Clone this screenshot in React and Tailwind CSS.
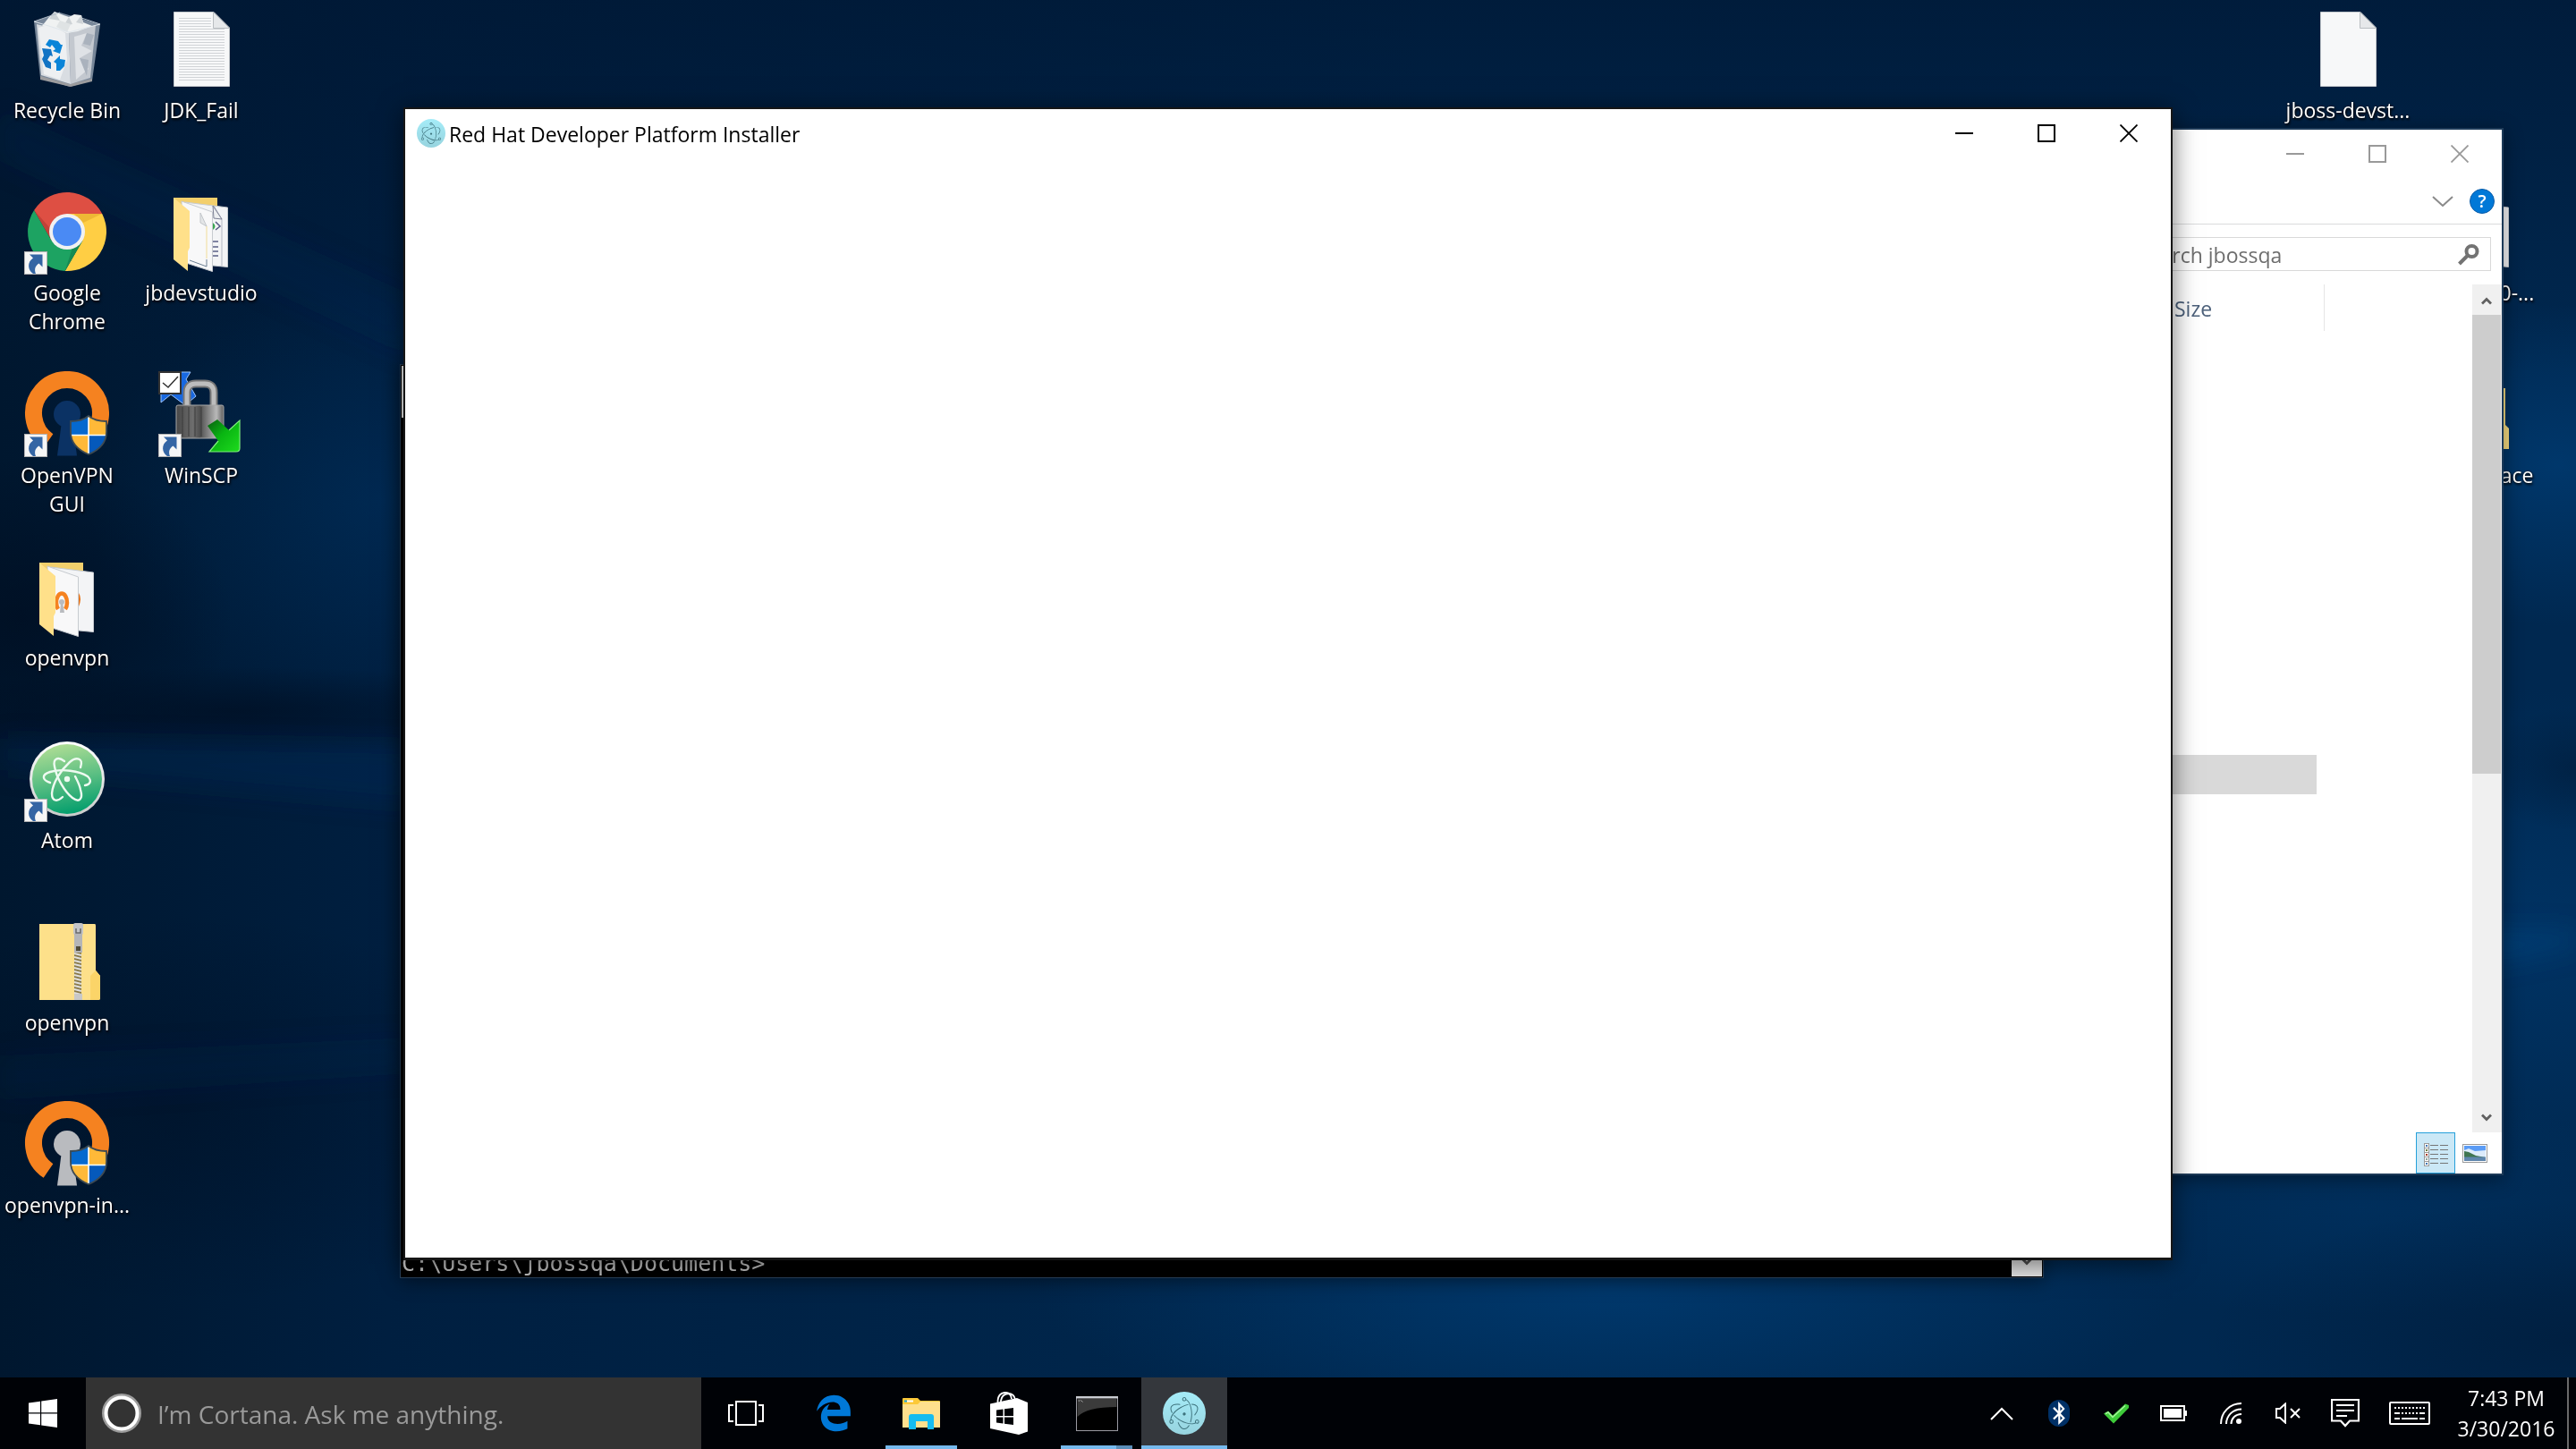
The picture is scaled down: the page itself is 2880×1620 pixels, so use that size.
import React from "react";
import { SiElectron } from "react-icons/si";
import { FaEdgeLegacy, FaBluetoothB } from "react-icons/fa6";

/* ---------- wallpaper ---------- */

function Wallpaper() {
  return (
    <svg
      className="absolute inset-0 h-full w-full"
      viewBox="0 0 2880 1540"
      preserveAspectRatio="none"
      aria-hidden="true"
    >
      <defs>
        <linearGradient id="wp-base" x1="0" y1="0" x2="1" y2="0">
          <stop offset="0" stopColor="#00172f" />
          <stop offset="0.15" stopColor="#001f40" />
          <stop offset="0.55" stopColor="#00284f" />
          <stop offset="1" stopColor="#002850" />
        </linearGradient>
        <linearGradient id="wp-top" x1="0" y1="0" x2="0" y2="1">
          <stop offset="0" stopColor="#001733" stopOpacity="0.7" />
          <stop offset="1" stopColor="#001733" stopOpacity="0" />
        </linearGradient>
        <radialGradient id="wp-glow">
          <stop offset="0" stopColor="#004380" stopOpacity="0.8" />
          <stop offset="1" stopColor="#004380" stopOpacity="0" />
        </radialGradient>
        <radialGradient id="wp-dark">
          <stop offset="0" stopColor="#000c1e" stopOpacity="0.6" />
          <stop offset="1" stopColor="#000c1e" stopOpacity="0" />
        </radialGradient>
        <filter id="wp-soft" x="-20%" y="-20%" width="140%" height="140%">
          <feGaussianBlur stdDeviation="14" />
        </filter>
      </defs>
      <rect width="2880" height="1540" fill="url(#wp-base)" />
      <rect width="2880" height="420" fill="url(#wp-top)" />
      <ellipse cx="430" cy="560" rx="330" ry="240" fill="url(#wp-glow)" opacity="0.35" />
      <ellipse cx="20" cy="690" rx="240" ry="180" fill="url(#wp-dark)" />
      <ellipse cx="260" cy="795" rx="360" ry="50" fill="url(#wp-dark)" />
      <ellipse cx="200" cy="1240" rx="420" ry="220" fill="url(#wp-dark)" opacity="0.6" />
      <ellipse cx="1800" cy="1440" rx="640" ry="170" fill="url(#wp-glow)" opacity="0.75" />
      <ellipse cx="2860" cy="520" rx="260" ry="180" fill="url(#wp-glow)" opacity="0.7" />
      <ellipse cx="2820" cy="1050" rx="420" ry="280" fill="url(#wp-glow)" opacity="0.5" />
      <ellipse cx="2640" cy="1350" rx="420" ry="120" fill="url(#wp-glow)" opacity="0.3" />
      <ellipse cx="2880" cy="1500" rx="420" ry="160" fill="url(#wp-dark)" opacity="0.5" />
      <ellipse cx="2880" cy="860" rx="110" ry="70" fill="url(#wp-dark)" opacity="0.5" />
      <g filter="url(#wp-soft)">
        <path d="M0 120 L460 330 L460 400 L0 180Z" fill="#003468" opacity="0.15" />
        <path d="M0 826 L460 834 L460 900 L0 860Z" fill="#003468" opacity="0.25" />
        <path d="M0 1180 L460 1160 L460 1200 L0 1230Z" fill="#003468" opacity="0.12" />
        <path d="M2780 1040 L2880 1040 L2880 1060 L2780 1080Z" fill="#00508f" opacity="0.3" />
      </g>
    </svg>
  );
}

/* ---------- desktop icon drawings (96 x 96) ---------- */

const iconBox = "size-24 shrink-0";

function ShortcutBadge() {
  return (
    <g>
      <rect x="0.5" y="70.5" width="25" height="25" fill="#f6f6f6" stroke="#b4b4b4" />
      <path
        d="M6 73.500 H20.500 V87.500 L16.500 83.500 C12.500 86 11 90 13 95 H10 C4 91 3 82 10 77.500Z"
        fill="#3465a4"
      />
    </g>
  );
}

function Shield() {
  return (
    <g>
      <clipPath id="shield-clip">
        <path d="M72 50 C66 55 59 56 52 56 V68 C52 80 60 88 72 93 C84 88 92 80 92 68 V56 C85 56 78 55 72 50Z" />
      </clipPath>
      <g clipPath="url(#shield-clip)">
        <rect x="50" y="48" width="22" height="23" fill="#0569cf" />
        <rect x="72" y="48" width="22" height="23" fill="#ffb938" />
        <rect x="50" y="71" width="22" height="24" fill="#ffb938" />
        <rect x="72" y="71" width="22" height="24" fill="#0559bb" />
        <path d="M72 48 V95 M50 71.500 H94" stroke="#fff" strokeWidth="1.600" />
      </g>
      <path
        d="M72 50 C66 55 59 56 52 56 V68 C52 80 60 88 72 93 C84 88 92 80 92 68 V56 C85 56 78 55 72 50Z"
        fill="none"
        stroke="#3d4a52"
        strokeWidth="1.800"
      />
    </g>
  );
}

function RecycleBinIcon() {
  return (
    <svg className={iconBox} viewBox="0 0 96 96" aria-hidden="true">
      <path d="M11 17 L40 7 L85 20 L76 83 L51 90 L18 80Z" fill="#8d9bab" opacity="0.85" />
      <path d="M18 78 L51 87 L76 81 V84 L52 90 L18 82Z" fill="#9c9c9e" />
      <path d="M14 20 L50 29 L52 87 L19 77Z" fill="#d9dde2" />
      <path d="M50 29 L80 21 L74 80 L52 87Z" fill="#c3c8cf" />
      <path d="M16 24 L30 20 L46 30 L48 60 L40 82 L22 76Z" fill="#eef0f2" />
      <path d="M56 34 L70 30 L64 44 L76 50 L62 58 L72 70 L58 82Z" fill="#dfe2e6" />
      <path d="M70 30 L78 32 L74 44 L66 42Z M62 58 L72 60 L70 78Z" fill="#aab2bd" />
      <path d="M20 22 L28 12 L34 6 L44 10 L50 12 L56 9 L64 10 L66 18 L76 22 L60 28 L48 30 L34 24Z" fill="#f0f2f2" />
      <path d="M34 6 L40 16 L28 14Z M50 12 L54 20 L44 22Z M64 10 L58 18 L66 20Z" fill="#ced3d6" />
      <path d="M40 16 L52 20 L48 29 L36 23Z" fill="#dfe3e4" />
      <path d="M11 17 L50 29 L85 20" fill="none" stroke="#dfe6ec" strokeWidth="1" />
      <path d="M11 17 L40 7 M64 13 L85 20" fill="none" stroke="#aeb9c5" strokeWidth="1" />
      <path d="M28 37 L38 39 L41 43 L43 43 L40 53 L32 50 L35 48 L31 43 L29 46 L24 43Z" fill="#0a84d8" />
      <path d="M20 47 L30 48 L32 56 L29 55 L26 60 L30 63 V62 V70 L24 68 L20 59 L22 55Z" fill="#1173c4" />
      <path d="M33 62 L40 55 V59 L46 60 L45 67 L40 72 H36 V64Z" fill="#0a84d8" />
    </svg>
  );
}

function PageShape({ children }) {
  return (
    <svg className={iconBox} viewBox="0 0 96 96" aria-hidden="true">
      <path d="M17.500 6.500 H62 L79.500 24 V89.500 H17.500Z" fill="#f7f8f9" stroke="#c4c8cc" />
      <path d="M61.500 6.500 V24.500 H79.500Z" fill="#e6e8ea" stroke="#b9bdc1" />
      {children}
    </svg>
  );
}

function TextFileIcon() {
  return (
    <PageShape>
      <path
        d="M23 13.500H59M23 16.500H59M23 19.500H59M23 22.500H59"
        stroke="#d0d3d6"
      />
      <path
        d="M23 25.500H74M23 28.500H74M23 31.500H74M23 34.500H74M23 37.500H74M23 40.500H74M23 43.500H74M23 46.500H74M23 49.500H74M23 52.500H74M23 55.500H74M23 58.500H74M23 61.500H74M23 64.500H74M23 67.500H74M23 70.500H74M23 73.500H74M23 76.500H74M23 79.500H74M23 82.500H74"
        stroke="#d0d3d6"
      />
    </PageShape>
  );
}

function ChromeIcon() {
  return (
    <svg className={iconBox} viewBox="0 0 96 96" aria-hidden="true">
      <path d="M11.100 24.100 L30.700 58 L48 48 V28 H87.200 A44 44 0 0 0 11.100 24.100Z" fill="#de4f43" />
      <path d="M87.200 28 H48 V48 L65.300 58 L45.700 91.900 A44 44 0 0 0 87.200 28Z" fill="#ffce44" />
      <path d="M45.700 91.900 L65.300 58 L48 48 L30.700 58 L11.100 24.100 A44 44 0 0 0 45.700 91.900Z" fill="#1da362" />
      <path d="M11.100 24.100 L30.700 58 L29 44Z" fill="#b53c33" opacity="0.7" />
      <path d="M87.200 28 H56 L66 38Z" fill="#e0a52a" opacity="0.55" />
      <path d="M45.700 91.900 L65.300 58 L54 66Z" fill="#12804b" opacity="0.7" />
      <circle cx="48" cy="48" r="20" fill="#f1f1f1" />
      <circle cx="48" cy="48" r="16" fill="#4a8af4" />
      <ShortcutBadge />
    </svg>
  );
}

function OpenFolder({ children }) {
  return (
    <svg className={iconBox} viewBox="0 0 96 96" aria-hidden="true">
      <path d="M17 10 H66 V40 H17Z" fill="#f3cf6c" />
      <path d="M30 15 L77.500 21 V87.500 L40 84Z" fill="#f3f4f6" stroke="#c7cbd0" />
      <path d="M26 14 L60.500 26 V92.500 L28 82Z" fill="#f8f8f9" stroke="#c7cbd0" />
      {children}
      <path d="M17 10 L35 25 V66 L33 70 V92 L17 79Z" fill="#ffe08a" />
    </svg>
  );
}

function DevFolderIcon() {
  return (
    <OpenFolder>
      <path d="M62 19 L71 34 V86" fill="none" stroke="#b4b7c2" />
      <path d="M61 19 L71 34 L62 33Z" fill="#eceef0" stroke="#7c8094" />
      <path d="M61 38 q5 4 0 8z" fill="#3aa552" />
      <path d="M64 37 l5 5 -5 4" fill="none" stroke="#585c86" strokeWidth="1.500" />
      <path d="M61 59h6M61 65h6M61 70h6M61 75h6" stroke="#5b5f86" strokeWidth="1.500" />
      <path d="M47 27 V38 L54 42Z" fill="#e4e6e8" stroke="#c2c6ca" />
      <path d="M54 42 V78" stroke="#f0dc98" />
      <path d="M35 80 L54 87 V79" fill="none" stroke="#6c7f92" />
    </OpenFolder>
  );
}

function VpnFolderIcon() {
  return (
    <OpenFolder>
      <path d="M61 44 q4 6 0 15z" fill="#e8761c" />
      <path d="M38 62 A6 10 0 1 1 46 62" fill="none" stroke="#f58220" strokeWidth="4.500" />
      <circle cx="42" cy="54" r="3" fill="#b9bbbf" />
      <path d="M41 54 h2 l2 12 h-5z" fill="#b9bbbf" />
    </OpenFolder>
  );
}

function OpenVpnIcon({ hole, shortcut }) {
  return (
    <svg className={iconBox} viewBox="0 0 96 96" aria-hidden="true">
      <path d="M27 78 A37.500 37.500 0 1 1 69 78" fill="none" stroke="#f58220" strokeWidth="19" />
      <circle cx="48" cy="48" r="15" fill={hole} />
      <path d="M42 56 H54 L59 94.500 H37Z" fill={hole} />
      <Shield />
      {shortcut && <ShortcutBadge />}
    </svg>
  );
}

function WinScpIcon() {
  return (
    <svg className={iconBox} viewBox="0 0 96 96" aria-hidden="true">
      <defs>
        <linearGradient id="lock-body" x1="0" x2="1" y1="0" y2="0">
          <stop offset="0" stopColor="#474747" />
          <stop offset="0.35" stopColor="#6e6e6e" />
          <stop offset="0.5" stopColor="#4f4f4f" />
          <stop offset="0.85" stopColor="#b9b9b9" />
          <stop offset="1" stopColor="#5c5c5c" />
        </linearGradient>
        <linearGradient id="lock-arrow" x1="0" x2="1" y1="0" y2="1">
          <stop offset="0" stopColor="#0a5c10" />
          <stop offset="0.45" stopColor="#09b512" />
          <stop offset="1" stopColor="#1edb1e" />
        </linearGradient>
      </defs>
      <path d="M24 1 H36 L31 9 L42 28 L30 38 L14 26 L3 35 V22Z" fill="#1868e0" stroke="#9cc4f8" />
      <path d="M32 42 V24 Q32 14 42 14 H52 Q62 14 62 24 V42" fill="none" stroke="#767676" strokeWidth="9" />
      <path d="M32 42 V24 Q32 14 42 14 H52 Q62 14 62 24 V42" fill="none" stroke="#bdbdbd" strokeWidth="5" />
      <rect x="20" y="38" width="53" height="37" rx="2" fill="url(#lock-body)" stroke="#a8a8a8" />
      <path d="M27 40V73M34 40V73M41 40V73M48 40V73" stroke="#3c3c3c" strokeWidth="2" opacity="0.5" />
      <path d="M55 61 L66 54 L79 66 L91 55 V86 Q91 90 87 90 H57 L67 78Z" fill="url(#lock-arrow)" />
      <path d="M79 66 L91 55 V86 Q91 90 87 90 H57 L67 78" fill="none" stroke="#7ff07c" strokeWidth="1.200" />
      <rect x="1" y="1" width="24" height="24" fill="#fff" stroke="#333" strokeWidth="2" />
      <path d="M5 13 L11 18 L22 6" fill="none" stroke="#333" strokeWidth="1.500" />
      <ShortcutBadge />
    </svg>
  );
}

function AtomIcon() {
  return (
    <svg className={iconBox} viewBox="0 0 96 96" aria-hidden="true">
      <defs>
        <linearGradient id="atom-fill" x1="0.400" x2="0.600" y1="0" y2="1">
          <stop offset="0" stopColor="#aedd94" />
          <stop offset="0.5" stopColor="#5cbf83" />
          <stop offset="1" stopColor="#019d6c" />
        </linearGradient>
        <linearGradient id="atom-rim" x1="0" x2="0" y1="0" y2="1">
          <stop offset="0" stopColor="#ffffff" />
          <stop offset="1" stopColor="#c9cbca" />
        </linearGradient>
      </defs>
      <circle cx="48" cy="48" r="42" fill="url(#atom-rim)" />
      <circle cx="48" cy="48" r="39" fill="url(#atom-fill)" />
      <g fill="none" stroke="#eefaf1" strokeWidth="2.400" strokeLinecap="round">
        <path d="M29 52 C20 49 19 43 29 40 C42 36 62 39 71 45 C76 50 74 54 68 55" />
        <path d="M45 28 C37 22 32 26 34 34 C36 46 45 62 54 69 C62 75 66 70 63 60 C62 54 59 49 57 45" />
        <path d="M63 35 C67 24 58 23 51 29 C41 38 32 52 31 64 C31 74 38 73 43 68" />
      </g>
      <circle cx="48" cy="48" r="3.200" fill="#eefaf1" />
      <ShortcutBadge />
    </svg>
  );
}

function ZipFolderIcon() {
  return (
    <svg className={iconBox} viewBox="0 0 96 96" aria-hidden="true">
      <path d="M17 6 H79 Q80 6 80 8 V58 L85 64 V89 Q85 91 83 91 H17Z" fill="#fde08a" />
      <path d="M74 91 V64 L80 58 L85 64 V89 Q85 91 83 91Z" fill="#fbd468" />
      <rect x="56" y="36" width="8" height="50" fill="#8a7a48" />
      <path
        d="M56 39l8 2M56 43l8 2M56 47l8 2M56 51l8 2M56 55l8 2M56 59l8 2M56 63l8 2M56 67l8 2M56 71l8 2M56 75l8 2M56 79l8 2M56 83l8 2"
        stroke="#dedede"
        strokeWidth="2"
      />
      <rect x="56" y="84" width="9" height="7" fill="#c8c8c8" />
      <rect x="55" y="5" width="11" height="13" rx="2" fill="#c4c5c7" />
      <rect x="56" y="17" width="9" height="21" fill="#b4b5b8" />
      <rect x="58" y="31" width="5" height="5" fill="#4f4a38" />
      <path d="M58 11v5h5v-5" fill="none" stroke="#68696b" strokeWidth="1.500" />
    </svg>
  );
}

function PlainFolderIcon() {
  return (
    <svg className={iconBox} viewBox="0 0 96 96" aria-hidden="true">
      <path d="M17 19 H74 V60 L78 64 V87 H17Z" fill="#f3d87e" />
    </svg>
  );
}

/* ---------- desktop ---------- */

function DesktopItem({ icon, label, place }) {
  return (
    <button
      type="button"
      className={`${place} flex h-[204px] flex-col items-center gap-1 pt-[7px] text-center text-[23px] leading-8 text-white [text-shadow:1px_2px_3px_#000,0_0_2px_#000]`}
    >
      {icon}
      <span className="max-w-[146px]">{label}</span>
    </button>
  );
}

const leftItems = [
  { label: "Recycle Bin", icon: <RecycleBinIcon />, place: "col-start-1 row-start-1" },
  { label: "JDK_Fail", icon: <TextFileIcon />, place: "col-start-2 row-start-1" },
  { label: "Google Chrome", icon: <ChromeIcon />, place: "col-start-1 row-start-2" },
  { label: "jbdevstudio", icon: <DevFolderIcon />, place: "col-start-2 row-start-2" },
  { label: "OpenVPN GUI", icon: <OpenVpnIcon hole="#0b3264" shortcut />, place: "col-start-1 row-start-3" },
  { label: "WinSCP", icon: <WinScpIcon />, place: "col-start-2 row-start-3" },
  { label: "openvpn", icon: <VpnFolderIcon />, place: "col-start-1 row-start-4" },
  { label: "Atom", icon: <AtomIcon />, place: "col-start-1 row-start-5" },
  { label: "openvpn", icon: <ZipFolderIcon />, place: "col-start-1 row-start-6" },
  { label: "openvpn-in...", icon: <OpenVpnIcon hole="#b9bbbf" />, place: "col-start-1 row-start-7" },
];

const rightItems = [
  { label: "jboss-devst...", icon: <PageShape />, place: "col-start-1 row-start-1" },
  { label: "jdk-1.8.0-...", icon: <OpenFolder />, place: "col-start-2 row-start-2" },
  { label: "workspace", icon: <PlainFolderIcon />, place: "col-start-2 row-start-3" },
];

function IconGrid({ items }) {
  return (
    <div className="grid auto-rows-[204px] grid-cols-[150px_150px] content-start">
      {items.map((item, i) => (
        <DesktopItem key={i} {...item} />
      ))}
    </div>
  );
}

/* ---------- windows ---------- */

function CaptionButtons({ tone }) {
  const cell = "grid h-full w-[92px] place-items-center";
  return (
    <div className={`mr-px ml-auto flex h-full ${tone}`}>
      <button type="button" aria-label="Minimize" className={cell}>
        <svg className="size-5" viewBox="0 0 20 20" stroke="currentColor" strokeWidth="2">
          <path d="M0 10H20" />
        </svg>
      </button>
      <button type="button" aria-label="Maximize" className={cell}>
        <svg className="size-5" viewBox="0 0 20 20" fill="none" stroke="currentColor" strokeWidth="2">
          <rect x="1" y="1" width="18" height="18" />
        </svg>
      </button>
      <button type="button" aria-label="Close" className={cell}>
        <svg className="size-5" viewBox="0 0 20 20" stroke="currentColor" strokeWidth="1.800">
          <path d="M0.500 0.500L19.500 19.500M19.500 0.500L0.500 19.500" />
        </svg>
      </button>
    </div>
  );
}

function Chevron({ className, up }) {
  return (
    <svg className={className} viewBox="0 0 12 9" fill="none" stroke="currentColor" strokeWidth="2.800" aria-hidden="true">
      <path d={up ? "M1 7.500L6 2.500L11 7.500" : "M1 1.500L6 6.500L11 1.500"} />
    </svg>
  );
}

function ConsoleWindow() {
  return (
    <section
      aria-label="Command prompt"
      className="absolute top-[407px] right-[595px] bottom-[111px] left-[447px] flex flex-col border border-[#28405a] bg-black p-px shadow-[0_4px_20px_rgba(0,0,0,0.4)]"
    >
      <div className="h-[58px] shrink-0 bg-[#f0f0f0]" />
      <div className="flex min-h-0 flex-1">
        <p className="flex flex-1 items-end font-['DejaVu_Sans_Mono','Liberation_Mono',monospace] text-[25px] leading-7 text-[#c0c0c0]">
          C:\Users\jbossqa\Documents&gt;
        </p>
        <div className="flex w-[34px] flex-col justify-end bg-[#e6e6e6] pb-3 text-[#505050]">
          <Chevron className="mx-auto h-[9px] w-3" />
        </div>
      </div>
    </section>
  );
}

function DetailsViewIcon() {
  return (
    <svg className="h-[26px] w-[27px]" viewBox="0 0 27 26" aria-hidden="true">
      <rect x="0.500" y="0.500" width="5" height="25" fill="#fff" stroke="#9a9a9a" />
      <path d="M0 5.500H6M0 10.500H6M0 15.500H6M0 20.500H6" stroke="#9a9a9a" />
      <path d="M2 3H4" stroke="#3f76b5" strokeWidth="2" />
      <path d="M2 8H4" stroke="#6a7a3c" strokeWidth="2" />
      <path d="M2 13H4" stroke="#a8371c" strokeWidth="2" />
      <path d="M2 18H4" stroke="#8ca49a" strokeWidth="2" />
      <path d="M2 23H4" stroke="#3f76b5" strokeWidth="2" />
      <path
        d="M7 2.500H16M18 2.500H27M7 7.500H16M18 7.500H27M7 12.500H16M18 12.500H27M7 17.500H16M18 17.500H27M7 22.500H16M18 22.500H27"
        stroke="#757575"
      />
    </svg>
  );
}

function ThumbnailViewIcon() {
  return (
    <svg className="h-[21px] w-7" viewBox="0 0 28 21" aria-hidden="true">
      <rect x="0.500" y="0.500" width="27" height="20" fill="#fff" stroke="#9a9a9a" />
      <rect x="2" y="2" width="24" height="17" fill="#5b9cf5" />
      <path d="M2 7l5-2 7 3 12-1v8H2z" fill="#dcebfb" />
      <path d="M2 8l5 1 8 4 11 2H2z" fill="#3f7550" />
      <rect x="2" y="14.500" width="24" height="4.500" fill="#5f86ad" />
    </svg>
  );
}

function ExplorerWindow() {
  return (
    <section
      aria-label="File Explorer"
      className="absolute top-[143px] right-[81px] bottom-[226px] left-[1100px] flex flex-col border-2 border-[#1d3a58] bg-white shadow-[0_4px_20px_rgba(0,0,0,0.4)]"
    >
      <header className="flex h-[54px] shrink-0">
        <CaptionButtons tone="text-[#999999]" />
      </header>
      <div className="flex h-[52px] shrink-0 items-center justify-end gap-[18px] border-b border-[#dadbdc] pr-2">
        <button type="button" aria-label="Expand the ribbon" className="text-[#8a8a8a]">
          <svg className="h-3 w-6" viewBox="0 0 24 12" fill="none" stroke="currentColor" strokeWidth="2">
            <path d="M1 1L12 11L23 1" />
          </svg>
        </button>
        <button
          type="button"
          aria-label="Help"
          className="grid size-7 place-items-center rounded-full border border-[#0a5ca8] bg-[#0078d7] text-xl leading-6 font-semibold text-white"
        >
          ?
        </button>
      </div>
      <label className="mt-[14px] mr-3 flex h-[38px] w-[408px] shrink-0 items-center self-end border border-[#d9d9d9] pt-0.5 pr-3 pl-3">
        <input
          type="text"
          aria-label="Search jbossqa"
          placeholder="Search jbossqa"
          className="min-w-0 flex-1 text-[23px] leading-8 outline-none placeholder:text-[#6d6d6d]"
        />
        <svg className="size-6" viewBox="0 0 24 24" fill="none" stroke="#737373" aria-hidden="true">
          <circle cx="15.500" cy="8" r="6" strokeWidth="4" />
          <path d="M11 12.500L1.500 22" strokeWidth="4" />
        </svg>
      </label>
      <div className="mt-[15px] flex min-h-0 flex-1">
        <div className="min-w-0 flex-1">
          <table className="w-full table-fixed border-collapse text-left">
            <colgroup>
              <col />
              <col className="w-[173px]" />
              <col className="w-[166px]" />
            </colgroup>
            <thead>
              <tr className="h-[52px]">
                <td />
                <th className="border-r border-[#e5e5e5] pt-0.5 pl-1.5 text-[23px] leading-8 font-normal text-[#4c607a]">Size</th>
                <td />
              </tr>
            </thead>
            <tbody>
              <tr className="h-[474px]">
                <td colSpan={3} />
              </tr>
              <tr className="h-11">
                <td colSpan={2} className="p-0 pr-2">
                  <div className="h-11 bg-[#d9d9d9]" />
                </td>
                <td />
              </tr>
            </tbody>
          </table>
        </div>
        <div className="flex w-[33px] flex-col bg-[#f0f0f0] pr-px text-[#606060]">
          <div className="grid h-[34px] shrink-0 place-items-center pt-0.5">
            <Chevron up className="h-[9px] w-3" />
          </div>
          <div className="h-[513px] bg-[#cdcdcd]" />
          <div className="mt-auto grid h-[34px] shrink-0 place-items-center">
            <Chevron className="h-[9px] w-3" />
          </div>
        </div>
      </div>
      <footer className="flex h-[46px] shrink-0 items-center justify-end gap-2 pr-4">
        <button
          type="button"
          aria-label="Details view"
          className="grid h-full w-11 place-items-center border border-[#26a0da] bg-[#cbe8f6] pt-1"
        >
          <DetailsViewIcon />
        </button>
        <button type="button" aria-label="Thumbnail view">
          <ThumbnailViewIcon />
        </button>
      </footer>
    </section>
  );
}

function ElectronBadge({ disc, glyph }) {
  return (
    <span className={`grid place-items-center rounded-full bg-linear-to-b from-[#a5ecf8] to-[#97d4df] ${disc}`}>
      <SiElectron className={`text-[#3d727c] ${glyph}`} aria-hidden="true" />
    </span>
  );
}

function InstallerWindow() {
  return (
    <section
      aria-label="Red Hat Developer Platform Installer"
      className="absolute top-[120px] right-[451px] bottom-[131px] left-[451px] border-2 border-b-[3px] border-[#161616] bg-white shadow-[0_4px_26px_rgba(0,0,0,0.55)]"
    >
      <header className="flex h-[54px] items-center gap-1 pl-[13px]">
        <ElectronBadge disc="size-8" glyph="size-6" />
        <h1 className="pt-0.5 text-[23px] leading-8 text-black">Red Hat Developer Platform Installer</h1>
        <CaptionButtons tone="text-black" />
      </header>
    </section>
  );
}

/* ---------- taskbar ---------- */

function TaskButton({ label, children, underline, active }) {
  return (
    <button
      type="button"
      aria-label={label}
      className={`flex h-full w-24 flex-col ${active ? "bg-[#34373c]" : ""}`}
    >
      <span className="grid w-full flex-1 place-items-center pt-1">{children}</span>
      <span className={`flex h-1 ${active ? "w-full" : "mx-2 w-20"}`}>
        {underline && <span className="flex-1 bg-[#76b9ed]" />}
        {underline === "stacked" && <span className="w-[18px] bg-[#5a8db8]" />}
      </span>
    </button>
  );
}

function TrayButton({ label, children, width = "w-16" }) {
  return (
    <button type="button" aria-label={label} className={`grid h-full place-items-center ${width}`}>
      {children}
    </button>
  );
}

function Taskbar() {
  return (
    <footer className="relative flex h-20 shrink-0 bg-[#000206] text-white">
      <button type="button" aria-label="Start" className="grid w-24 place-items-center">
        <svg className="size-8" viewBox="0 0 32 32" fill="#fff" aria-hidden="true">
          <path d="M0 4.500L13 2.700V15.300H0ZM14.200 2.500L32 0V15.300H14.200ZM0 16.500H13V29.200L0 27.400ZM14.200 16.500H32V32L14.200 29.400Z" />
        </svg>
      </button>
      <label className="flex w-[688px] items-center gap-[18px] bg-[#333333] pl-[18px]">
        <svg className="size-11 shrink-0" viewBox="0 0 44 44" fill="none" aria-hidden="true">
          <circle cx="22" cy="22" r="20" stroke="#9c9c9c" strokeWidth="4" />
          <circle cx="22" cy="22" r="17.500" stroke="#fff" strokeWidth="4" />
        </svg>
        <input
          type="text"
          aria-label="Ask Cortana"
          placeholder="I’m Cortana. Ask me anything."
          className="min-w-0 flex-1 pt-0.5 text-[28px] leading-10 outline-none placeholder:text-[#9a9a9a]"
        />
      </label>
      <nav className="ml-0.5 flex gap-0.5" aria-label="Taskbar">
        <TaskButton label="Task View">
          <svg className="h-7 w-10" viewBox="0 0 40 28" fill="none" stroke="#fff" strokeWidth="2" aria-hidden="true">
            <rect x="9" y="1" width="22" height="26" />
            <path d="M6 5H1V23H6M34 5H39V23H34" />
          </svg>
        </TaskButton>
        <TaskButton label="Microsoft Edge">
          <FaEdgeLegacy className="size-[42px] text-[#0078d7]" aria-hidden="true" />
        </TaskButton>
        <TaskButton label="File Explorer" underline>
          <svg className="h-9 w-[42px]" viewBox="0 0 42 36" aria-hidden="true">
            <path d="M0 2 Q0 1 1 1 H17 L20 4 H41 Q42 4 42 5 V34 H0Z" fill="#fcc938" />
            <path d="M0 8 H17 L20 5 H42 V34 H0Z" fill="#fee08d" />
            <rect x="2" y="3.500" width="3" height="2" fill="#1ea7e0" />
            <rect x="5" y="3.500" width="7" height="2" fill="#fff" />
            <path d="M7 36 V22 Q7 19 10 19 H32 Q35 19 35 22 V36 H28 V27 H15 V36Z" fill="#16bcf0" />
          </svg>
        </TaskButton>
        <TaskButton label="Store">
          <svg className="h-12 w-[42px]" viewBox="0 0 42 48" aria-hidden="true">
            <path d="M8.500 13 V10 Q9 2 16 1 Q23 0 24 8" fill="none" stroke="#fff" strokeWidth="1.800" />
            <path d="M12 12 V10 Q13 3 20 2 Q27 2 28 9" fill="none" stroke="#fff" strokeWidth="1.800" />
            <path d="M0 13.500 L30 7 L42 12 V44.500 L32 48 L0 41Z" fill="#fff" />
            <path d="M7 20.500 L14.500 19.500 V27 H7ZM16 19.200 L26 18 V27 H16ZM7 28.500 H14.500 V35.500 L7 34.500ZM16 28.500 H26 V37 L16 35.700Z" fill="#000206" />
          </svg>
        </TaskButton>
        <TaskButton label="Command prompt" underline="stacked">
          <svg className="h-[39px] w-[47px]" viewBox="0 0 47 39" aria-hidden="true">
            <rect x="0.500" y="0.500" width="46" height="38" fill="#000" stroke="#9a9aa2" />
            <rect x="0" y="0" width="47" height="2.500" fill="#c9ccd2" />
            <path d="M1.500 3 H45.500 V12 Q12 12 1.500 23Z" fill="#3b3b3b" />
            <path d="M2.500 5h2M5.500 4.500l2 2" stroke="#aaa" />
          </svg>
        </TaskButton>
        <TaskButton label="Red Hat Developer Platform Installer" underline active>
          <ElectronBadge disc="size-12" glyph="size-9" />
        </TaskButton>
      </nav>
      <div className="ml-auto flex">
        <TrayButton label="Show hidden icons">
          <svg className="h-[15px] w-[26px]" viewBox="0 0 26 15" fill="none" stroke="#fff" strokeWidth="2" aria-hidden="true">
            <path d="M1 14L13 2L25 14" />
          </svg>
        </TrayButton>
        <TrayButton label="Bluetooth">
          <span className="grid h-[30px] w-6 place-items-center rounded-[12px] bg-[#003066]">
            <FaBluetoothB className="h-[26px] w-5 text-white" aria-hidden="true" />
          </span>
        </TrayButton>
        <TrayButton label="Status">
          <svg className="h-[23px] w-7" viewBox="0 0 28 23" aria-hidden="true">
            <path d="M0 11.500 L5 8.500 L10 13.500 L24 0.500 L28 2 V5 L11 22.500Z" fill="#3ecb3a" />
            <path d="M2 11.500 L5 10 L10 15.500 L24 2.500" fill="none" stroke="#a5f39c" strokeWidth="1.500" />
          </svg>
        </TrayButton>
        <TrayButton label="Battery">
          <svg className="h-[18px] w-[30px]" viewBox="0 0 30 18" aria-hidden="true">
            <rect x="1" y="1" width="26" height="16" fill="none" stroke="#fff" strokeWidth="2" />
            <rect x="4" y="4" width="20" height="10" fill="#fff" />
            <rect x="28" y="6" width="2" height="6" fill="#fff" />
          </svg>
        </TrayButton>
        <TrayButton label="Network">
          <svg className="size-6" viewBox="0 0 24 24" fill="none" stroke="#fff" strokeWidth="2" aria-hidden="true">
            <path d="M1 24C1 11 11 1 24 1M7 24C7 15 14 7.500 24 7.500M12.500 24C12.500 18 17 13 24 13" />
            <circle cx="21" cy="21" r="3" fill="#fff" stroke="none" />
          </svg>
        </TrayButton>
        <TrayButton label="Volume muted">
          <svg className="h-6 w-7" viewBox="0 0 28 24" fill="none" stroke="#fff" strokeWidth="2" aria-hidden="true">
            <path d="M1 7H5L11 1.500V22.500L5 17H1Z" />
            <path d="M17 7L27 17M27 7L17 17" />
          </svg>
        </TrayButton>
        <TrayButton label="Action Center">
          <svg className="size-8" viewBox="0 0 32 32" fill="none" stroke="#fff" strokeWidth="2.200" aria-hidden="true">
            <path d="M1 1H31V24.500H21L16 30L11 24.500H1Z" />
            <path d="M6 7H26M6 13H26M6 19H18" strokeWidth="2" />
          </svg>
        </TrayButton>
        <TrayButton label="Touch keyboard" width="w-20">
          <svg className="h-[26px] w-[46px]" viewBox="0 0 46 26" fill="none" stroke="#fff" strokeWidth="2" aria-hidden="true">
            <rect x="1" y="1" width="44" height="24" rx="1" />
            <path d="M6 7H40" strokeDasharray="2 2" />
            <path d="M14 13H32" strokeDasharray="2 2" />
            <path d="M6 13H12M34 13H40M6 19H12M14 19H32M34 19H40" />
          </svg>
        </TrayButton>
        <button type="button" className="flex w-[136px] flex-col items-center justify-center text-[23px] leading-[34px]">
          <time>7:43 PM</time>
          <time>3/30/2016</time>
        </button>
        <button type="button" aria-label="Show desktop" className="w-2.5 border-l-2 border-[#6a6a6a]" />
      </div>
    </footer>
  );
}

export default function App() {
  return (
    <div className="flex h-screen w-full flex-col overflow-hidden bg-[#00152e] font-['Open_Sans','Noto_Sans',sans-serif]">
      <main className="relative min-h-0 flex-1">
        <Wallpaper />
        <div className="relative flex h-full justify-between pr-[30px]">
          <IconGrid items={leftItems} />
          <IconGrid items={rightItems} />
        </div>
        <ConsoleWindow />
        <ExplorerWindow />
        <InstallerWindow />
      </main>
      <Taskbar />
    </div>
  );
}
